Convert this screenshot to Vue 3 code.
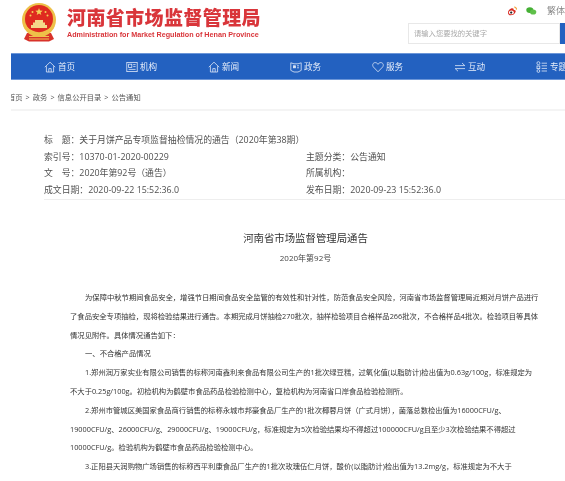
<script setup>
const navItems = [
  { label: '首页', icon: 'home' },
  { label: '机构', icon: 'org' },
  { label: '新闻', icon: 'home' },
  { label: '政务', icon: 'gov' },
  { label: '服务', icon: 'heart' },
  { label: '互动', icon: 'swap' },
  { label: '专题', icon: 'list' }
]
const lines = [
  { text: '为保障中秋节期间食品安全，增强节日期间食品安全监管的有效性和针对性，防范食品安全风险，河南省市场监督管理局近期对月饼产品进行', indent: true },
  { text: '了食品安全专项抽检，现将检验结果进行通告。本期完成月饼抽检270批次，抽样检验项目合格样品266批次，不合格样品4批次。检验项目等具体' },
  { text: '情况见附件。具体情况通告如下：' },
  { text: '一、不合格产品情况', indent: true },
  { text: '1.郑州润万家实业有限公司销售的标称河南鑫利来食品有限公司生产的1批次绿豆糕，过氧化值(以脂肪计)检出值为0.63g/100g，标准规定为', indent: true },
  { text: '不大于0.25g/100g。初检机构为鹤壁市食品药品检验检测中心，复检机构为河南省口岸食品检验检测所。' },
  { text: '2.郑州市管城区美国家食品商行销售的标称永城市邦豪食品厂生产的1批次椰蓉月饼（广式月饼），菌落总数检出值为16000CFU/g、', indent: true },
  { text: '19000CFU/g、26000CFU/g、29000CFU/g、19000CFU/g，标准规定为5次检验结果均不得超过100000CFU/g且至少3次检验结果不得超过' },
  { text: '10000CFU/g。检验机构为鹤壁市食品药品检验检测中心。' },
  { text: '3.正阳县天润购物广场销售的标称西平利康食品厂生产的1批次玫瑰伍仁月饼，酸价(以脂肪计)检出值为13.2mg/g，标准规定为不大于', indent: true }
]
</script>

<template>
  <div class="page">
    <header class="top">
      <div class="brand">
        <svg class="emblem" viewBox="0 0 38 40" width="38" height="40">
          <path d="M7 30 L4 36 L9 38.5 H29 L34 36 L31 30 Z" fill="#d8322a" />
          <path d="M9 33.5 H29 M9 36 H29" stroke="#f0c050" stroke-width="1" />
          <circle cx="19" cy="17" r="17" fill="#eec049" />
          <circle cx="19" cy="16" r="14" fill="#df2a20" />
          <path d="M19 5 l1 2.6 2.7 .1 -2.1 1.7 .7 2.6 -2.3 -1.5 -2.3 1.5 .7 -2.6 -2.1 -1.7 2.7 -.1 Z" fill="#f4cf58" />
          <circle cx="12.5" cy="9" r="1" fill="#f4cf58" />
          <circle cx="25.5" cy="9" r="1" fill="#f4cf58" />
          <circle cx="10.5" cy="12.5" r="1" fill="#f4cf58" />
          <circle cx="27.5" cy="12.5" r="1" fill="#f4cf58" />
          <path d="M11 25 V22 H13 V19.5 H15 V17 H23 V19.5 H25 V22 H27 V25 Z" fill="#f4d98a" />
          <path d="M5 24 Q19 37 33 24" fill="none" stroke="#eec049" stroke-width="2.6" />
        </svg>
        <div class="brand-text">
          <div class="brand-cn">河南省市场监督管理局</div>
          <div class="brand-en">Administration for Market Regulation of Henan Province</div>
        </div>
      </div>
      <div class="tools">
        <div class="links">
          <svg viewBox="0 0 11 10" width="11" height="10">
            <path d="M1 6.5 C1 4.5 3.5 2 5.5 2 C7 2 7.2 3 7 4 C9 3.6 9.5 5 9 6 C8.3 8 6 9.5 3.8 9.5 C2 9.5 1 8.2 1 6.5 Z" fill="#d92b24" />
            <ellipse cx="4.6" cy="6.5" rx="2.6" ry="2" fill="#fff" />
            <circle cx="4.4" cy="6.6" r="1.2" fill="#222" />
            <path d="M7.5 .8 A2.6 2.6 0 0 1 10 3.6" fill="none" stroke="#f3a33a" stroke-width="1.3" />
          </svg>
          <svg viewBox="0 0 11 8" width="11" height="8">
            <ellipse cx="4" cy="3" rx="3.7" ry="3" fill="#45b035" />
            <ellipse cx="7.5" cy="5" rx="3.3" ry="2.7" fill="#5fc04a" />
          </svg>
          <span class="trad">繁体</span>
        </div>
        <div class="search">
          <div class="search-input">请输入您要找的关键字</div>
          <div class="search-btn"></div>
        </div>
      </div>
    </header>

    <nav class="nav">
      <div v-for="item in navItems" :key="item.label" class="nav-item">
        <svg class="nav-icon" viewBox="0 0 12 12" width="12" height="12" fill="none" stroke="#dfe8f7" stroke-width="0.8">
          <template v-if="item.icon === 'home'">
            <path d="M.8 6.2 L6 1.2 L11.2 6.2" />
            <path d="M2.4 5.2 V11 H9.6 V5.2" />
            <path d="M4.8 11 V7.6 H7.2 V11" />
          </template>
          <template v-else-if="item.icon === 'org'">
            <rect x=".8" y="1.4" width="10.4" height="9.2" />
            <rect x="2.6" y="3.2" width="3.2" height="3.2" />
            <path d="M7.2 3.6 H9.6 M7.2 5.6 H9.6 M2.6 8.4 H9.6" />
          </template>
          <template v-else-if="item.icon === 'gov'">
            <path d="M.8 1.8 L4 2.8 H8 L11.2 1.8 V9.4 L8 11 H4 L.8 9.4 Z" />
            <rect x="3.4" y="4.8" width="2" height="2" fill="#dfe8f7" />
            <path d="M7 4.8 H9 M7 6.8 H9" />
          </template>
          <template v-else-if="item.icon === 'heart'">
            <path d="M6 10.8 L1.4 6 C0 4.3 .8 1.6 3.2 1.6 C4.5 1.6 5.5 2.4 6 3.3 C6.5 2.4 7.5 1.6 8.8 1.6 C11.2 1.6 12 4.3 10.6 6 Z" />
          </template>
          <template v-else-if="item.icon === 'swap'">
            <path d="M1 4.6 H10.8 L8 2" />
            <path d="M11 7.6 H1.2 L4 10.2" />
          </template>
          <template v-else>
            <circle cx="2.4" cy="2.2" r="1.5" />
            <rect x="1" y="5" width="2.8" height="2.6" />
            <circle cx="2.4" cy="10" r="1.4" />
            <path d="M5.6 2.2 H11 M5.6 4.8 H11 M5.6 7.4 H11 M5.6 10 H11" />
          </template>
        </svg>
        <span>{{ item.label }}</span>
      </div>
    </nav>

    <div class="crumb">
      <div class="crumb-inner">
        <span>首页</span><i>&gt;</i><span>政务</span><i>&gt;</i><span>信息公开目录</span><i>&gt;</i><span>公告通知</span>
      </div>
    </div>

    <section class="meta">
      <div class="meta-row full">标　题：关于月饼产品专项监督抽检情况的通告（2020年第38期）</div>
      <div class="meta-row">索引号：10370-01-2020-00229</div>
      <div class="meta-row">主题分类：公告通知</div>
      <div class="meta-row">文　号：2020年第92号（通告）</div>
      <div class="meta-row">所属机构：</div>
      <div class="meta-row">成文日期：2020-09-22 15:52:36.0</div>
      <div class="meta-row">发布日期：2020-09-23 15:52:36.0</div>
    </section>

    <h1 class="doc-title">河南省市场监督管理局通告</h1>
    <div class="doc-no">2020年第92号</div>

    <article class="content">
      <p v-for="line in lines" :key="line.text" :class="{ indent: line.indent }">{{ line.text }}</p>
    </article>
  </div>
</template>

<style>
html, body { margin: 0; background: #fff; overflow: hidden; }
</style>

<style scoped>
.page {
  width: 565px;
  height: 481px;
  overflow: hidden;
  background: #fff;
  font-family: "Open Sans", "Noto Sans CJK SC", sans-serif;
  color: #444;
  filter: blur(0.4px);
}
.top {
  height: 53px;
  display: flex;
  justify-content: space-between;
  box-sizing: border-box;
  padding-left: 20px;
}
.brand {
  display: flex;
  gap: 9px;
  padding-top: 3px;
  align-items: flex-start;
}
.emblem { flex: none; }
.brand-text { padding-top: 3px; }
.brand-cn {
  font-size: 19px;
  line-height: 22px;
  font-weight: 900;
  letter-spacing: 0.4px;
  color: #d9353a;
  font-family: "Noto Sans CJK SC", sans-serif;
  white-space: nowrap;
}
.brand-en {
  font-family: "Liberation Sans", sans-serif;
  font-size: 7.2px;
  line-height: 9px;
  margin-top: 2px;
  font-weight: 700;
  color: #d9353a;
  white-space: nowrap;
}
.tools {
  width: 157px;
}
.links {
  height: 23px;
  display: flex;
  align-items: center;
  box-sizing: border-box;
  padding: 0 0 2px 99px;
  gap: 9px;
  white-space: nowrap;
}
.trad { font-size: 9px; color: #888; margin-left: 1px; }
.search {
  display: flex;
  height: 21px;
}
.search-input {
  width: 152px;
  box-sizing: border-box;
  border: 1px solid #e8e8e8;
  padding-left: 5px;
  font-size: 7.3px;
  line-height: 19px;
  color: #aaa;
  white-space: nowrap;
}
.search-btn { flex: 1; background: #2361c0; }
.nav {
  margin-left: 11px;
  height: 27px;
  display: flex;
  background: #2361c0;
  border-top: 1px solid #6c96d8;
  border-bottom: 1px solid #6c96d8;
  box-sizing: border-box;
  overflow: hidden;
}
.nav-item {
  flex: none;
  width: 82px;
  box-sizing: border-box;
  padding-left: 33px;
  display: flex;
  align-items: center;
  gap: 2px;
  color: #e6edf9;
  font-size: 8.6px;
  white-space: nowrap;
}
.nav-icon { flex: none; }
.crumb {
  margin-left: 11px;
  height: 29px;
  overflow: hidden;
  border-bottom: 2px solid #f4f4f4;
}
.crumb-inner {
  margin-left: -3px;
  display: flex;
  font-size: 7.3px;
  line-height: 16px;
  height: 16px;
  margin-top: 9px;
  color: #555;
  white-space: nowrap;
}
.crumb-inner i { font-style: normal; margin: 0 3px; }
.meta {
  margin: 21px 0 0 44px;
  display: grid;
  grid-template-columns: 262px 1fr;
  grid-auto-rows: 16.7px;
  height: 67px;
  border-bottom: 1px solid #eee;
  font-size: 8.85px;
  line-height: 16.7px;
  color: #505050;
  white-space: nowrap;
}
.meta-row.full { grid-column: 1 / -1; }
.doc-title {
  margin: 30px 0 0;
  text-align: center;
  padding-left: 46px;
  font-size: 10.4px;
  line-height: 16px;
  font-weight: 400;
  color: #333;
}
.doc-no {
  margin-top: 6px;
  text-align: center;
  padding-left: 46px;
  font-size: 8px;
  line-height: 12px;
  color: #444;
}
.content {
  margin: 24px 0 0 70px;
  font-size: 7.32px;
  line-height: 18.8px;
  color: #333;
  white-space: nowrap;
}
.content p { margin: 0; }
.content p.indent { padding-left: 15px; }
</style>
